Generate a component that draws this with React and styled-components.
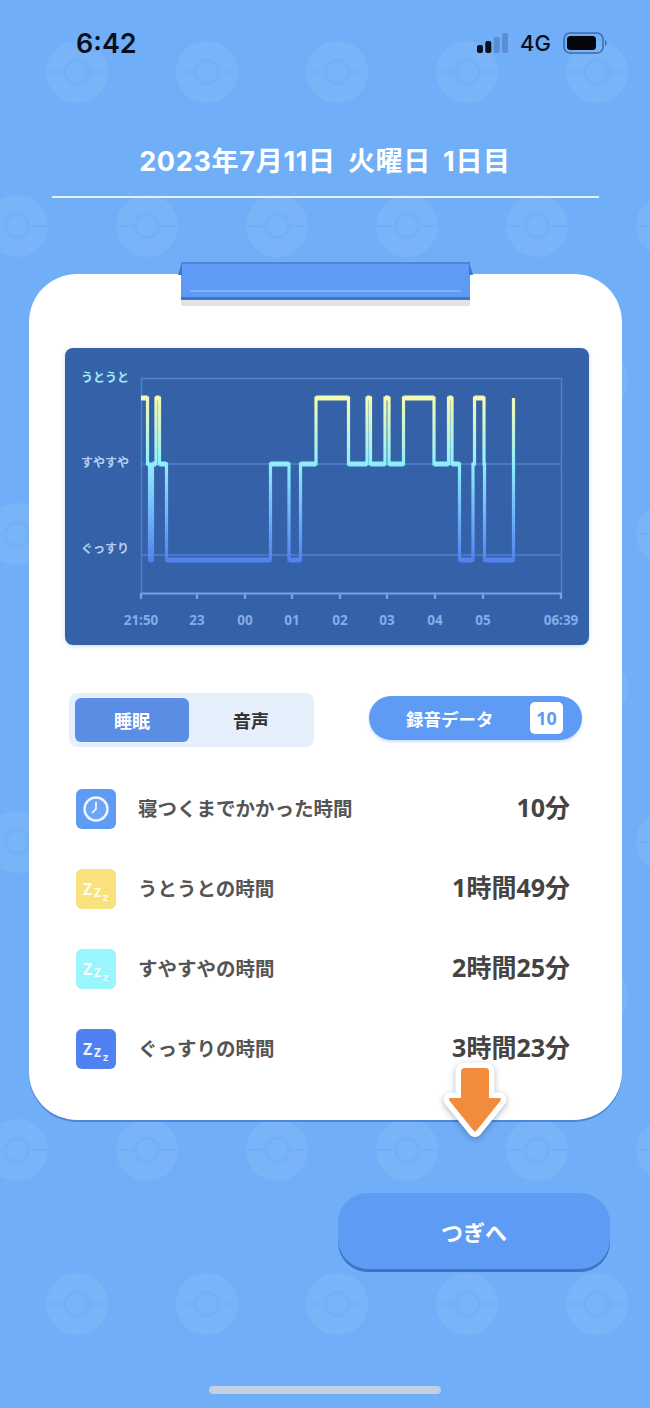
import React from 'react';
import styled, { createGlobalStyle } from 'styled-components';

const GlobalStyle = createGlobalStyle`
  html, body {
    margin: 0;
    padding: 0;
    background: #70aef8;
  }

  body {
    font-family: 'Noto Sans', 'Noto Sans CJK JP', sans-serif;
  }
`;

const Page = styled.div`
  position: relative;
  display: flex;
  flex-flow: column nowrap;
  width: 650px;
  height: 1408px;
  overflow: hidden;
  background: #70aef8;
`;

const Pattern = styled.svg`
  position: absolute;
  top: 0;
  left: 0;
  width: 650px;
  height: 1408px;
`;

const StatusBar = styled.div`
  position: relative;
  display: flex;
  align-items: center;
  justify-content: space-between;
  height: 86px;
  padding: 0 42px 0 76px;
`;

const Time = styled.span`
  font-family: Inter, sans-serif;
  font-size: 27px;
  font-weight: 600;
  color: #0a0f1c;
`;

const StatusIcons = styled.div`
  display: flex;
  align-items: center;
  gap: 12px;
`;

const Carrier = styled.span`
  font-family: Inter, sans-serif;
  font-size: 22px;
  font-weight: 500;
  color: #0a0f1c;
`;

const Title = styled.h1`
  position: relative;
  margin: 58px 0 0;
  font-family: Inter, 'Noto Sans CJK JP', sans-serif;
  font-size: 27px;
  line-height: 36px;
  font-weight: 700;
  letter-spacing: 0.7px;
  word-spacing: 5px;
  text-align: center;
  color: #fff;
`;

const Divider = styled.div`
  position: relative;
  height: 2px;
  margin: 16px 51px 0 52px;
  background: #e2f3ff;
`;

const Card = styled.div`
  position: relative;
  box-sizing: border-box;
  height: 846px;
  margin: 76px 28px 0 29px;
  padding: 74px 33px 0 36px;
  background: #fff;
  border-radius: 48px;
  box-shadow: 0 2px 0 #4f86d6;
`;

const Clip = styled.div`
  position: absolute;
  top: -12px;
  left: 152px;
  box-sizing: border-box;
  width: 289px;
  height: 38px;
  padding-top: 26px;
  background: #5e9bf5;
  border-top: 2px solid #4f86da;
  border-bottom: 3px solid #4077c9;
  box-shadow: 0 6px 0 #e2e4e8;

  &::before,
  &::after {
    content: '';
    position: absolute;
    top: -2px;
    width: 4px;
    height: 13px;
    background: #4077c9;
  }

  &::before {
    left: -3px;
    clip-path: polygon(100% 0, 100% 100%, 0 100%);
  }

  &::after {
    right: -3px;
    clip-path: polygon(0 0, 100% 100%, 0 100%);
  }
`;

const ClipLine = styled.div`
  height: 2px;
  margin: 0 9px;
  background: #82b2f8;
`;

const ChartPanel = styled.div`
  height: 297px;
  border-radius: 8px;
  background: #3561a8;
  box-shadow: 0 1px 4px rgba(53, 97, 168, 0.25);
  overflow: hidden;
`;

const ChartSvg = styled.svg`
  display: block;
  width: 524px;
  height: 297px;
  font-family: 'Noto Sans', 'Noto Sans CJK JP', sans-serif;
  font-weight: 700;
`;

const Controls = styled.div`
  display: flex;
  align-items: center;
  justify-content: space-between;
  height: 54px;
  margin-top: 48px;
  padding: 0 7px 0 4px;
`;

const Toggle = styled.div`
  box-sizing: border-box;
  display: flex;
  align-items: center;
  width: 245px;
  height: 54px;
  padding: 0 0 0 6px;
  border-radius: 8px;
  background: #e6effc;
`;

const ToggleItem = styled.div`
  flex: none;
  display: flex;
  align-items: center;
  justify-content: center;
  width: ${props => (props.$active ? '114px' : '124px')};
  height: 44px;
  border-radius: 6px;
  font-size: 18px;
  font-weight: 700;
  color: ${props => (props.$active ? '#fff' : '#333')};
  background: ${props => (props.$active ? '#5b8de4' : 'transparent')};
`;

const RecordPill = styled.div`
  box-sizing: border-box;
  display: flex;
  align-items: center;
  justify-content: space-between;
  width: 213px;
  height: 44px;
  margin-bottom: 4px;
  padding: 0 19px 0 37px;
  border-radius: 22px;
  background: #5e9bf5;
  box-shadow: 0 2px 3px rgba(94, 155, 245, 0.3);
  font-size: 17.5px;
  font-weight: 700;
  color: #fff;
`;

const Badge = styled.span`
  display: flex;
  align-items: center;
  justify-content: center;
  width: 33px;
  height: 32px;
  border-radius: 5px;
  background: #fff;
  color: #5e9bf5;
  font-size: 18px;
`;

const Rows = styled.div`
  display: flex;
  flex-flow: column nowrap;
  gap: 40px;
  margin-top: 42px;
  padding: 0 19px 0 11px;
`;

const Row = styled.div`
  display: flex;
  align-items: center;
  height: 40px;
`;

const IconBox = styled.div`
  position: relative;
  flex: none;
  display: flex;
  align-items: center;
  justify-content: center;
  width: 40px;
  height: 40px;
  border-radius: 6px;
  background: ${props => props.$color};
`;

const Zzz = styled.span`
  position: absolute;
  top: ${props => props.$top}px;
  left: ${props => props.$left}px;
  font-family: 'Noto Sans', sans-serif;
  font-size: ${props => props.$size}px;
  line-height: 1;
  font-weight: 700;
  color: rgba(255, 255, 255, 0.92);
`;

const RowLabel = styled.span`
  margin: -4px 0 0 22px;
  font-size: 19.5px;
  font-weight: 700;
  color: #555;
`;

const RowValue = styled.span`
  margin: -6px 0 0 auto;
  font-size: 25px;
  font-weight: 700;
  color: #444;
`;

const ArrowMark = styled.svg`
  position: absolute;
  right: 113px;
  bottom: -24px;
  width: 68px;
  height: 84px;
  overflow: visible;
  filter: drop-shadow(0 2px 3px rgba(30, 50, 90, 0.35));
`;

const NextButton = styled.button`
  align-self: flex-end;
  position: relative;
  width: 272px;
  height: 79px;
  margin: 73px 40px 0 0;
  padding: 0 0 4px;
  border: 0;
  border-radius: 30px;
  background: #5e9bf5;
  box-shadow: inset 0 -3px 0 #3d75c6;
  font-family: inherit;
  font-size: 22px;
  font-weight: 700;
  color: #fff;
`;

const HomeBar = styled.div`
  position: relative;
  align-self: center;
  width: 232px;
  height: 8px;
  margin-top: 114px;
  border-radius: 4px;
  background: #c3cfe2;
`;

const rowsData = [
  { label: '寝つくまでかかった時間', value: '10分', color: '#5e9bf5', clock: true },
  { label: 'うとうとの時間', value: '1時間49分', color: '#f9e27d' },
  { label: 'すやすやの時間', value: '2時間25分', color: '#9bf5fd' },
  { label: 'ぐっすりの時間', value: '3時間23分', color: '#4f82f0' },
];

const TOP = 398;
const MID = 464;
const LOW = 560;

// [x, level] steps of the sleep trace, in page coordinates
const trace = [
  [141, TOP], [147.5, MID], [149.5, LOW], [152.5, MID], [156, TOP], [159.5, MID],
  [166.5, LOW], [270.5, MID], [289, LOW], [300.5, MID], [316, TOP], [348.5, MID],
  [367, TOP], [370.5, MID], [385, TOP], [389, MID], [403.5, TOP], [434, MID],
  [448.5, TOP], [452, MID], [459.5, LOW], [473, MID], [474.5, TOP], [484, MID],
  [484.5, LOW], [513.5, TOP],
];

const stepPath = () => {
  let d = `M${trace[0][0]} ${trace[0][1]}`;
  trace.slice(1).forEach(([x, y]) => {
    d += ` H${x} V${y}`;
  });
  return d;
};

const flatPath = () =>
  trace
    .map(([x, y], i) => {
      const next = trace[i + 1];
      return next ? `M${x} ${y} H${next[0]}` : '';
    })
    .join(' ');

const ticks = [
  [141, '21:50'], [197, '23'], [245, '00'], [292, '01'], [340, '02'],
  [387, '03'], [435, '04'], [483, '05'], [561, '06:39'],
];

const ARROW = 'M23.5 9.5 H44.5 A2 2 0 0 1 46.5 11.5 V39.5 H58.5 L34 70 L9.5 39.5 H21.5 V11.5 A2 2 0 0 1 23.5 9.5 Z';

const Ball = ({ x, y }) => (
  <g transform={`translate(${x} ${y})`}>
    <circle r="31" fill="#fff" fillOpacity="0.07" />
    <path d="M-31 0 H-13.5 M13.5 0 H31" stroke="#70aef8" strokeWidth="2.5" strokeOpacity="0.7" />
    <circle r="11.7" fill="none" stroke="#70aef8" strokeWidth="3.5" strokeOpacity="0.75" />
  </g>
);

const Background = () => (
  <Pattern viewBox="0 0 650 1408" aria-hidden="true">
    <defs>
      <pattern id="balls" width="130" height="308" patternUnits="userSpaceOnUse">
        <Ball x={77} y={72} />
        <Ball x={17} y={226} />
        <Ball x={147} y={226} />
      </pattern>
    </defs>
    <rect width="650" height="1408" fill="url(#balls)" />
  </Pattern>
);

const SignalIcon = () => (
  <svg width="31" height="20" viewBox="0 0 31 20">
    <rect x="0" y="12" width="6" height="8" rx="2" fill="#0a0f1c" />
    <rect x="8.3" y="8" width="6" height="12" rx="2" fill="#0a0f1c" />
    <rect x="16.7" y="4" width="6" height="16" rx="2" fill="#5a8ed4" />
    <rect x="25" y="0" width="6" height="20" rx="2" fill="#5a8ed4" />
  </svg>
);

const BatteryIcon = () => (
  <svg width="45" height="22" viewBox="0 0 45 22">
    <rect x="1" y="1" width="39" height="20" rx="6" fill="none" stroke="#3d6aa8" strokeWidth="1.5" />
    <rect x="4" y="4" width="29" height="14" rx="3.5" fill="#05070c" />
    <path d="M42 8 C44 9 44 13 42 14 Z" fill="#3d6aa8" />
  </svg>
);

const ClockIcon = () => (
  <svg width="28" height="28" viewBox="0 0 28 28" fill="none" stroke="#fff">
    <circle cx="14" cy="14" r="11.5" strokeWidth="2.4" strokeOpacity="0.9" fill="rgba(255,255,255,0.1)" />
    <path d="M14 7.5 V14 L10.5 17.5" strokeWidth="1.6" strokeLinecap="round" strokeLinejoin="round" />
  </svg>
);

const SleepChart = () => (
  <ChartSvg viewBox="65 348 524 297">
    <defs>
      <linearGradient id="trace" gradientUnits="userSpaceOnUse" x1="0" y1={TOP} x2="0" y2={LOW}>
        <stop offset="0" stopColor="#f5fbb0" />
        <stop offset="0.4" stopColor="#8ff0fc" />
        <stop offset="0.72" stopColor="#6fb4f8" />
        <stop offset="1" stopColor="#5282f0" />
      </linearGradient>
    </defs>

    <g stroke="#5180cc" strokeWidth="1.5" fill="none">
      <path d="M141.5 593 V378.5 H561.5 V593" />
      <path d="M141 464 H562 M141 555 H562" />
      <path d="M141 593.5 H562" strokeWidth="2" stroke="#74a2e6" />
      {ticks.map(([x]) => (
        <path key={x} d={`M${x} 593 V599`} strokeWidth="2.4" stroke="#74a2e6" />
      ))}
    </g>

    <path d={stepPath()} fill="none" stroke="url(#trace)" strokeWidth="3.2" />
    <path d={flatPath()} fill="none" stroke="url(#trace)" strokeWidth="5" />

    <text x="81" y="382" fontSize="12" fill="#a0ebf0">うとうと</text>
    <text x="81" y="467" fontSize="12" fill="#b6cff2">すやすや</text>
    <text x="81" y="553" fontSize="12" fill="#b6cff2">ぐっすり</text>

    {ticks.map(([x, label]) => (
      <text key={label} x={x} y="625" fontSize="13.5" textAnchor="middle" fill="#84ace8">
        {label}
      </text>
    ))}
  </ChartSvg>
);

const App = () => (
  <Page>
    <GlobalStyle />
    <Background />

    <StatusBar>
      <Time>6:42</Time>
      <StatusIcons>
        <SignalIcon />
        <Carrier>4G</Carrier>
        <BatteryIcon />
      </StatusIcons>
    </StatusBar>

    <Title>2023年7月11日 火曜日 1日目</Title>
    <Divider />

    <Card>
      <Clip>
        <ClipLine />
      </Clip>

      <ChartPanel>
        <SleepChart />
      </ChartPanel>

      <Controls>
        <Toggle>
          <ToggleItem $active>睡眠</ToggleItem>
          <ToggleItem>音声</ToggleItem>
        </Toggle>
        <RecordPill>
          録音データ
          <Badge>10</Badge>
        </RecordPill>
      </Controls>

      <Rows>
        {rowsData.map(row => (
          <Row key={row.label}>
            <IconBox $color={row.color}>
              {row.clock ? (
                <ClockIcon />
              ) : (
                <>
                  <Zzz $top={12} $left={7} $size={16}>Z</Zzz>
                  <Zzz $top={18} $left={18} $size={12}>Z</Zzz>
                  <Zzz $top={24} $left={27} $size={9}>Z</Zzz>
                </>
              )}
            </IconBox>
            <RowLabel>{row.label}</RowLabel>
            <RowValue>{row.value}</RowValue>
          </Row>
        ))}
      </Rows>

      <ArrowMark viewBox="0 0 68 84">
        <path d={ARROW} fill="#fff" stroke="#fff" strokeWidth="14" strokeLinejoin="round" />
        <path d={ARROW} fill="#f08c3c" stroke="#f08c3c" strokeWidth="3" strokeLinejoin="round" />
      </ArrowMark>
    </Card>

    <NextButton>つぎへ</NextButton>
    <HomeBar />
  </Page>
);

export default App;
